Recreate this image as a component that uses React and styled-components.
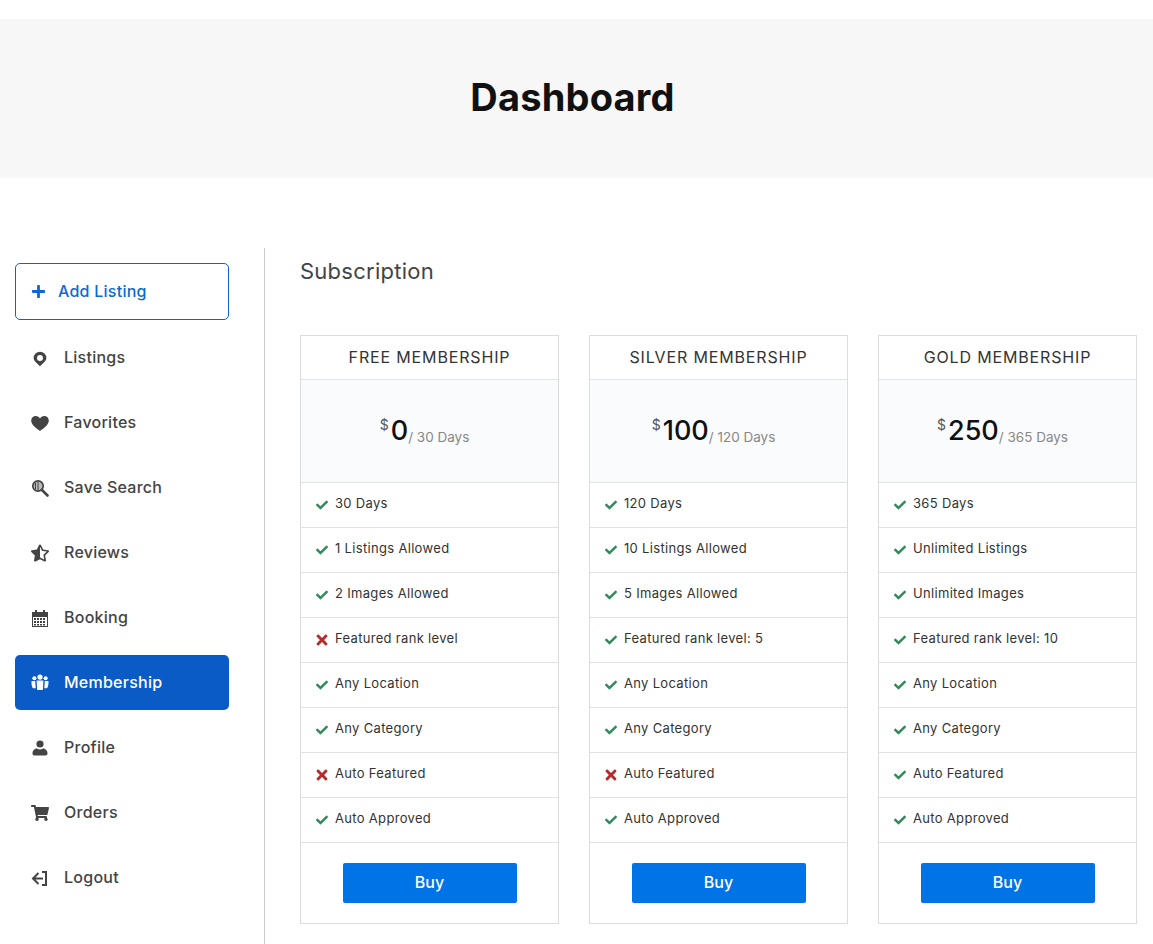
import React from 'react'
import styled, { createGlobalStyle } from 'styled-components'
import { FaCheck, FaPlus, FaShoppingCart, FaStarHalfAlt, FaTimes } from 'react-icons/fa'

const GlobalStyle = createGlobalStyle`
  * {
    margin: 0;
    padding: 0;
    box-sizing: border-box;
  }
  body {
    background: #fff;
    font-family: Inter, "Noto Sans", sans-serif;
    overflow: hidden;
  }
`

const Banner = styled.header`
  margin-top: 19px;
  height: 159px;
  background: #f7f7f7;
  display: flex;
  align-items: center;
  justify-content: center;
  padding: 0 8px 4px 0;
`

const Title = styled.h1`
  font-size: 38px;
  font-weight: 700;
  color: #111;
  letter-spacing: 0.2px;
`

const Layout = styled.div`
  margin-top: 70px;
  display: flex;
  height: 720px;
`

const Sidebar = styled.nav`
  width: 265px;
  flex-shrink: 0;
  padding: 15px 35px 0 15px;
  border-right: 1px solid #c9c9c9;
  display: flex;
  flex-direction: column;
  gap: 10px;
`

const AddButton = styled.a`
  height: 57px;
  display: flex;
  align-items: center;
  gap: 12px;
  padding: 0 0 2px 15px;
  border: 1px solid #0a66c2;
  border-radius: 5px;
  color: #0b6ad0;
  font-size: 16px;
  font-weight: 500;
  letter-spacing: 0.25px;
  svg {
    width: 15px;
    height: 15px;
    margin-top: 2px;
  }
`

const NavItem = styled.a`
  height: 55px;
  display: flex;
  align-items: center;
  padding: 0 0 2px 16px;
  border-radius: 5px;
  font-size: 16px;
  font-weight: 500;
  letter-spacing: 0.25px;
  color: ${p => (p.$active ? '#fff' : '#444')};
  background: ${p => (p.$active ? '#0a5bc6' : 'transparent')};
`

const NavIcon = styled.span`
  width: 18px;
  height: 18px;
  margin: 2px 15px 0 0;
  display: flex;
  align-items: center;
  justify-content: center;
  svg {
    width: 18px;
    height: 18px;
  }
`

const Main = styled.main`
  flex: 1;
  padding: 10px 16px 0 35px;
`

const Heading = styled.h2`
  font-size: 22px;
  font-weight: 400;
  line-height: 27px;
  color: #444;
  letter-spacing: 0.25px;
`

const Plans = styled.div`
  margin-top: 50px;
  display: grid;
  grid-template-columns: repeat(3, 259px);
  column-gap: 30px;
`

const Card = styled.section`
  height: 589px;
  border: 1px solid #dcdcdc;
`

const CardTitle = styled.h3`
  height: 44px;
  display: flex;
  align-items: center;
  justify-content: center;
  padding-bottom: 2px;
  border-bottom: 1px solid #e2e2e2;
  font-size: 16px;
  font-weight: 400;
  color: #333;
  letter-spacing: 0.85px;
`

const PriceBox = styled.div`
  height: 102px;
  padding: 32px 10px 0 0;
  display: flex;
  align-items: flex-start;
  justify-content: center;
  background: #fafbfd;
`

const Currency = styled.span`
  font-size: 14px;
  line-height: 16px;
  margin-top: 5px;
  margin-right: 2px;
  color: #555;
`

const Amount = styled.span`
  font-size: 27px;
  font-weight: 500;
  line-height: 38px;
  color: #111;
`

const Period = styled.span`
  font-size: 13.5px;
  line-height: 18px;
  margin-top: 16px;
  color: #888;
`

const FeatureList = styled.ul`
  list-style: none;
`

const Feature = styled.li`
  height: 45px;
  display: flex;
  align-items: center;
  padding: 0 0 5px 15px;
  border-top: 1px solid #e2e2e2;
  font-size: 13px;
  letter-spacing: 0.32px;
  color: #333;
`

const Mark = styled.span`
  width: 12px;
  margin: 4px 7px 0 0;
  display: flex;
  justify-content: center;
  color: ${p => (p.$on ? '#2e8b57' : '#b52a2a')};
  svg {
    flex-shrink: 0;
    width: ${p => (p.$on ? 12 : 16)}px;
    height: ${p => (p.$on ? 12 : 16)}px;
  }
`

const CardFooter = styled.div`
  height: 81px;
  border-top: 1px solid #e2e2e2;
  padding-top: 20px;
  display: flex;
  justify-content: center;
`

const BuyButton = styled.button`
  width: 174px;
  height: 40px;
  padding-bottom: 2px;
  border: 0;
  border-radius: 2px;
  background: #0073e6;
  color: #fff;
  font-family: inherit;
  font-size: 16px;
  font-weight: 500;
`

const PinIcon = () => (
  <svg viewBox="0 0 17 17" fill="currentColor">
    <path
      fillRule="evenodd"
      d="M8.500 2.500a6 6 0 0 1 6 6c0 3-3.600 5-6 8-2.400-3-6-5-6-8a6 6 0 0 1 6-6Zm0 3.200a2.800 2.800 0 1 0 0 5.600 2.800 2.800 0 0 0 0-5.600Z"
    />
  </svg>
)

const HeartIcon = () => (
  <svg viewBox="0 0 18 18" fill="currentColor">
    <path d="M9 17C5 14 .2 11 .2 6.600.2 4 2.200 2 4.800 2 6.600 2 8.100 3 9 4.500 9.900 3 11.400 2 13.200 2c2.600 0 4.600 2 4.600 4.600C17.800 11 13 14 9 17Z" />
  </svg>
)

const SearchIcon = () => (
  <svg viewBox="0 0 18 18" fill="none" stroke="currentColor">
    <circle cx="7" cy="7" r="5.200" strokeWidth="1.700" fill="#bbb" />
    <path d="M7 2.500v9M4.500 4v6" strokeWidth="1" />
    <path d="M11 11l5.500 5.500" strokeWidth="2.600" strokeLinecap="round" />
  </svg>
)

const CalendarIcon = () => (
  <svg viewBox="0 0 18 18" fill="currentColor">
    <path
      fillRule="evenodd"
      d="M1 3h3V1h2v2h6V1h2v2h3v15H1V3Zm1 5v9h14V8H2Z"
    />
    <path d="M3 9h2v2H3zM6 9h2v2H6zM9 9h2v2H9zM12 9h2v2h-2zM3 12h2v2H3zM6 12h2v2H6zM9 12h2v2H9zM12 12h2v2h-2zM3 15h2v1.500H3zM6 15h2v1.500H6zM9 15h2v1.500H9zM12 15h2v1.500h-2z" />
  </svg>
)

const PeopleIcon = () => (
  <svg viewBox="1 2 16 15.500" fill="currentColor">
    <circle cx="4" cy="5.500" r="1.800" />
    <circle cx="14" cy="5.500" r="1.800" />
    <circle cx="9" cy="4.500" r="2.300" />
    <path d="M1.500 8h3.200l.5 6.500H3.500C2 14.500 1.200 11 1.500 8ZM16.500 8h-3.200l-.5 6.500h1.700c1.500 0 2.300-3.500 2-6.500Z" />
    <path d="M6 7.500h6L11.500 16h-5L6 7.500Z" />
  </svg>
)

const UserIcon = () => (
  <svg viewBox="0 0 18 18" fill="currentColor">
    <circle cx="9" cy="5" r="3.600" />
    <path d="M1.500 14.500c0-3.300 2.500-5 4.500-5 1 .8 2 1.100 3 1.100s2-.3 3-1.100c2 0 4.500 1.700 4.500 5 0 1.200-.8 2-2 2h-11c-1.200 0-2-.8-2-2Z" />
  </svg>
)

const LogoutIcon = () => (
  <svg viewBox="0 0 18 18" fill="none" stroke="currentColor" strokeWidth="2">
    <path d="M11 3h4v13h-4M12 9.500H2M7.500 4 2 9.500 7.500 15" />
  </svg>
)

const navItems = [
  { label: 'Listings', icon: <PinIcon /> },
  { label: 'Favorites', icon: <HeartIcon /> },
  { label: 'Save Search', icon: <SearchIcon /> },
  { label: 'Reviews', icon: <FaStarHalfAlt /> },
  { label: 'Booking', icon: <CalendarIcon /> },
  { label: 'Membership', icon: <PeopleIcon />, active: true },
  { label: 'Profile', icon: <UserIcon /> },
  { label: 'Orders', icon: <FaShoppingCart /> },
  { label: 'Logout', icon: <LogoutIcon /> },
]

const plans = [
  {
    name: 'FREE MEMBERSHIP',
    price: '0',
    period: '/ 30 Days',
    features: [
      ['30 Days', true],
      ['1 Listings Allowed', true],
      ['2 Images Allowed', true],
      ['Featured rank level', false],
      ['Any Location', true],
      ['Any Category', true],
      ['Auto Featured', false],
      ['Auto Approved', true],
    ],
  },
  {
    name: 'SILVER MEMBERSHIP',
    price: '100',
    period: '/ 120 Days',
    features: [
      ['120 Days', true],
      ['10 Listings Allowed', true],
      ['5 Images Allowed', true],
      ['Featured rank level: 5', true],
      ['Any Location', true],
      ['Any Category', true],
      ['Auto Featured', false],
      ['Auto Approved', true],
    ],
  },
  {
    name: 'GOLD MEMBERSHIP',
    price: '250',
    period: '/ 365 Days',
    features: [
      ['365 Days', true],
      ['Unlimited Listings', true],
      ['Unlimited Images', true],
      ['Featured rank level: 10', true],
      ['Any Location', true],
      ['Any Category', true],
      ['Auto Featured', true],
      ['Auto Approved', true],
    ],
  },
]

export default function App() {
  return (
    <>
      <GlobalStyle />
      <Banner>
        <Title>Dashboard</Title>
      </Banner>
      <Layout>
        <Sidebar>
          <AddButton>
            <FaPlus />
            Add Listing
          </AddButton>
          {navItems.map(item => (
            <NavItem key={item.label} $active={item.active}>
              <NavIcon>{item.icon}</NavIcon>
              {item.label}
            </NavItem>
          ))}
        </Sidebar>
        <Main>
          <Heading>Subscription</Heading>
          <Plans>
            {plans.map(plan => (
              <Card key={plan.name}>
                <CardTitle>{plan.name}</CardTitle>
                <PriceBox>
                  <Currency>$</Currency>
                  <Amount>{plan.price}</Amount>
                  <Period>{plan.period}</Period>
                </PriceBox>
                <FeatureList>
                  {plan.features.map(([text, on]) => (
                    <Feature key={text}>
                      <Mark $on={on}>{on ? <FaCheck /> : <FaTimes />}</Mark>
                      {text}
                    </Feature>
                  ))}
                </FeatureList>
                <CardFooter>
                  <BuyButton>Buy</BuyButton>
                </CardFooter>
              </Card>
            ))}
          </Plans>
        </Main>
      </Layout>
    </>
  )
}
